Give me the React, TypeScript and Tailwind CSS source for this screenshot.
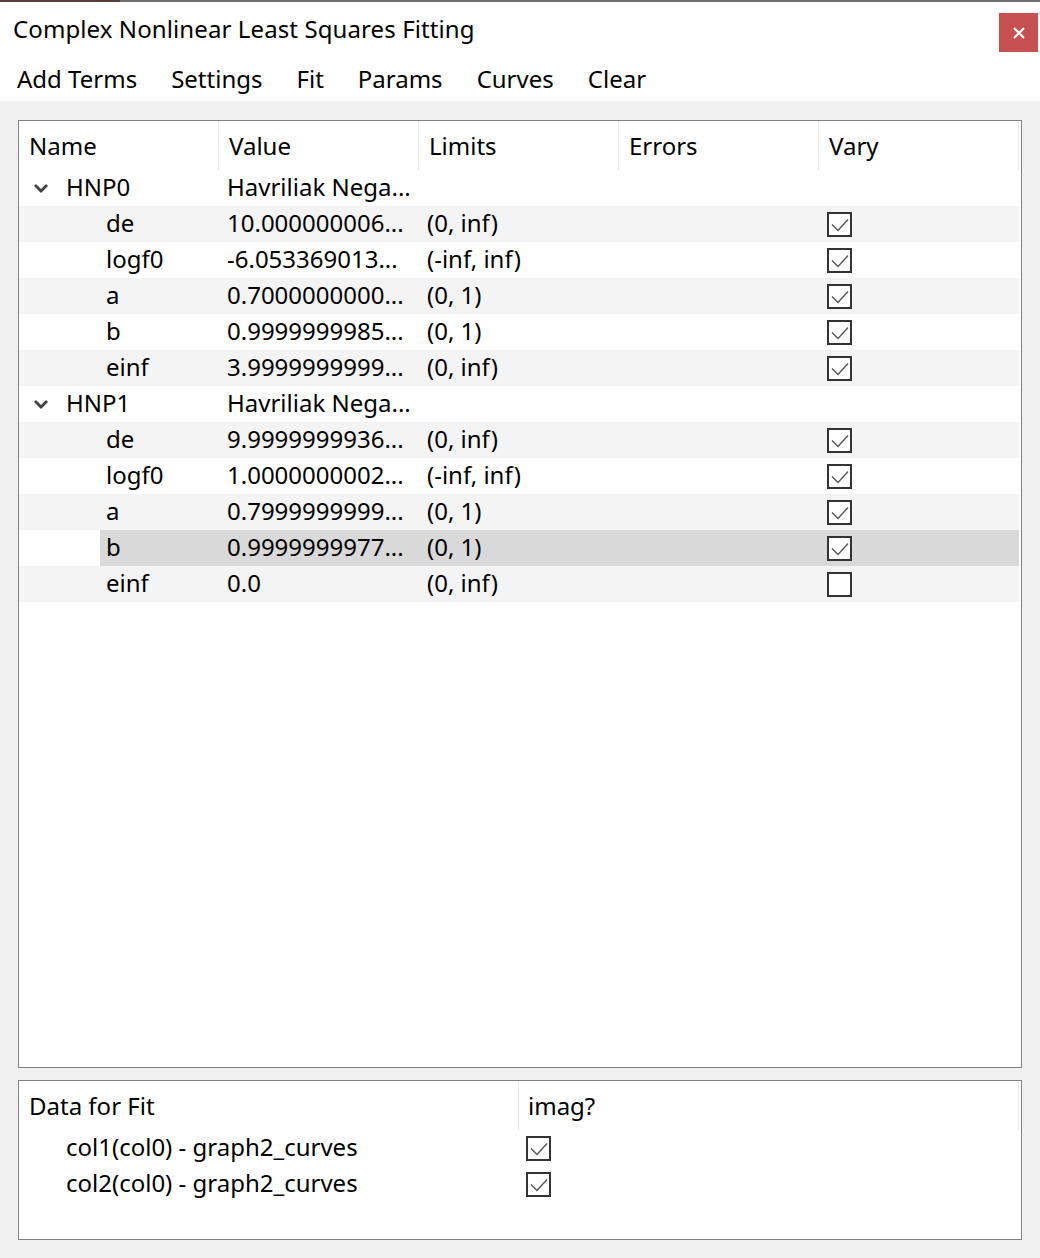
import React from "react";

type Param = { name: string; value: string; limits: string; vary: boolean; selected?: boolean };
type Term = { name: string; model: string; params: Param[] };

const terms: Term[] = [
  {
    name: "HNP0",
    model: "Havriliak Nega...",
    params: [
      { name: "de", value: "10.000000006...", limits: "(0, inf)", vary: true },
      { name: "logf0", value: "-6.053369013...", limits: "(-inf, inf)", vary: true },
      { name: "a", value: "0.7000000000...", limits: "(0, 1)", vary: true },
      { name: "b", value: "0.9999999985...", limits: "(0, 1)", vary: true },
      { name: "einf", value: "3.9999999999...", limits: "(0, inf)", vary: true },
    ],
  },
  {
    name: "HNP1",
    model: "Havriliak Nega...",
    params: [
      { name: "de", value: "9.9999999936...", limits: "(0, inf)", vary: true },
      { name: "logf0", value: "1.0000000002...", limits: "(-inf, inf)", vary: true },
      { name: "a", value: "0.7999999999...", limits: "(0, 1)", vary: true },
      { name: "b", value: "0.9999999977...", limits: "(0, 1)", vary: true, selected: true },
      { name: "einf", value: "0.0", limits: "(0, inf)", vary: false },
    ],
  },
];

const dataRows = ["col1(col0) - graph2_curves", "col2(col0) - graph2_curves"];

function CheckBox({ checked }: { checked: boolean }) {
  return (
    <svg width="25" height="25" viewBox="0 0 25 25" className="shrink-0">
      <rect x="1" y="1" width="23" height="23" fill="white" stroke="#333333" strokeWidth="2" />
      {checked && <path d="M5 12.5 L11 18.5 L21 7.5" fill="none" stroke="#555555" strokeWidth="1.4" />}
    </svg>
  );
}

function Chevron() {
  return (
    <svg width="16" height="10" viewBox="0 0 16 10" className="shrink-0">
      <path d="M2 2 L8 8 L14 2" fill="none" stroke="#404040" strokeWidth="2.8" />
    </svg>
  );
}

export default function App() {
  let rowIndex = 0;
  const rowBg = (i: number) => (i % 2 === 1 ? "bg-[#f4f4f4]" : "bg-white");

  return (
    <div className="w-[1040px] h-[1258px] bg-[#f0f0f0] flex flex-col font-['Noto_Sans',sans-serif] text-[24px] text-black leading-none">
      {/* window edge */}
      <div className="h-[2px] flex">
        <div className="w-[120px] bg-[#5b3c3c]" />
        <div className="flex-1 bg-[#707070]" />
      </div>

      {/* title bar */}
      <div className="h-[54px] bg-white flex items-start justify-between pl-[13px] pr-[2px]">
        <span className="mt-[15px] tracking-[0.1px]">Complex Nonlinear Least Squares Fitting</span>
        <button className="mt-[11px] w-[39px] h-[39px] bg-[#c75050] flex items-center justify-center">
          <svg width="12" height="12" viewBox="0 0 12 12">
            <path d="M1 1 L11 11 M11 1 L1 11" stroke="white" strokeWidth="2.2" />
          </svg>
        </button>
      </div>

      {/* menu */}
      <div className="h-[45px] bg-white flex items-center gap-[34px] pl-[17px]">
        {["Add Terms", "Settings", "Fit", "Params", "Curves", "Clear"].map((m) => (
          <span key={m}>{m}</span>
        ))}
      </div>

      <div className="flex-1 flex flex-col px-[18px] pt-[19px] pb-[18px] gap-[12px]">
        {/* parameter tree */}
        <div className="h-[948px] bg-white border border-[#828282] flex flex-col">
          <div className="h-[49px] flex">
            {["Name", "Value", "Limits", "Errors", "Vary"].map((h) => (
              <div key={h} className="w-[200px] border-r border-[#e8e8e8] flex items-center pl-[10px]">
                {h}
              </div>
            ))}
          </div>

          {terms.map((t) => {
            const gi = rowIndex++;
            return (
              <React.Fragment key={t.name}>
                <div className={`h-[36px] w-[1000px] flex items-center ${rowBg(gi)}`}>
                  <div className="w-[200px] flex items-center pl-[14px] gap-[17px]">
                    <Chevron />
                    <span className="-mt-[3px]">{t.name}</span>
                  </div>
                  <div className="w-[200px] pl-[8px] -mt-[3px]">{t.model}</div>
                </div>
                {t.params.map((p) => {
                  const i = rowIndex++;
                  return (
                    <div key={t.name + p.name} className={`h-[36px] w-[1000px] flex ${p.selected ? "bg-white" : rowBg(i)}`}>
                      <div className="w-[81px]" />
                      <div className={`flex-1 flex items-center ${p.selected ? "bg-[#d9d9d9]" : ""}`}>
                        <div className="w-[119px] pl-[6px] -mt-[3px]">{p.name}</div>
                        <div className="w-[200px] pl-[8px] -mt-[3px]">{p.value}</div>
                        <div className="w-[200px] pl-[8px] -mt-[3px]">{p.limits}</div>
                        <div className="w-[200px]" />
                        <div className="w-[200px] pl-[8px] flex items-center">
                          <CheckBox checked={p.vary} />
                        </div>
                      </div>
                    </div>
                  );
                })}
              </React.Fragment>
            );
          })}
        </div>

        {/* data for fit */}
        <div className="flex-1 bg-white border border-[#828282] flex flex-col">
          <div className="h-[49px] flex">
            <div className="w-[500px] border-r border-[#e8e8e8] flex items-center pl-[10px]">Data for Fit</div>
            <div className="w-[500px] border-r border-[#e8e8e8] flex items-center pl-[9px]">imag?</div>
          </div>
          {dataRows.map((d) => (
            <div key={d} className="h-[36px] w-[1000px] flex items-center">
              <div className="w-[500px] pl-[47px] -mt-[3px]">{d}</div>
              <div className="w-[500px] pl-[7px] flex items-center">
                <CheckBox checked />
              </div>
            </div>
          ))}
        </div>
      </div>
    </div>
  );
}
